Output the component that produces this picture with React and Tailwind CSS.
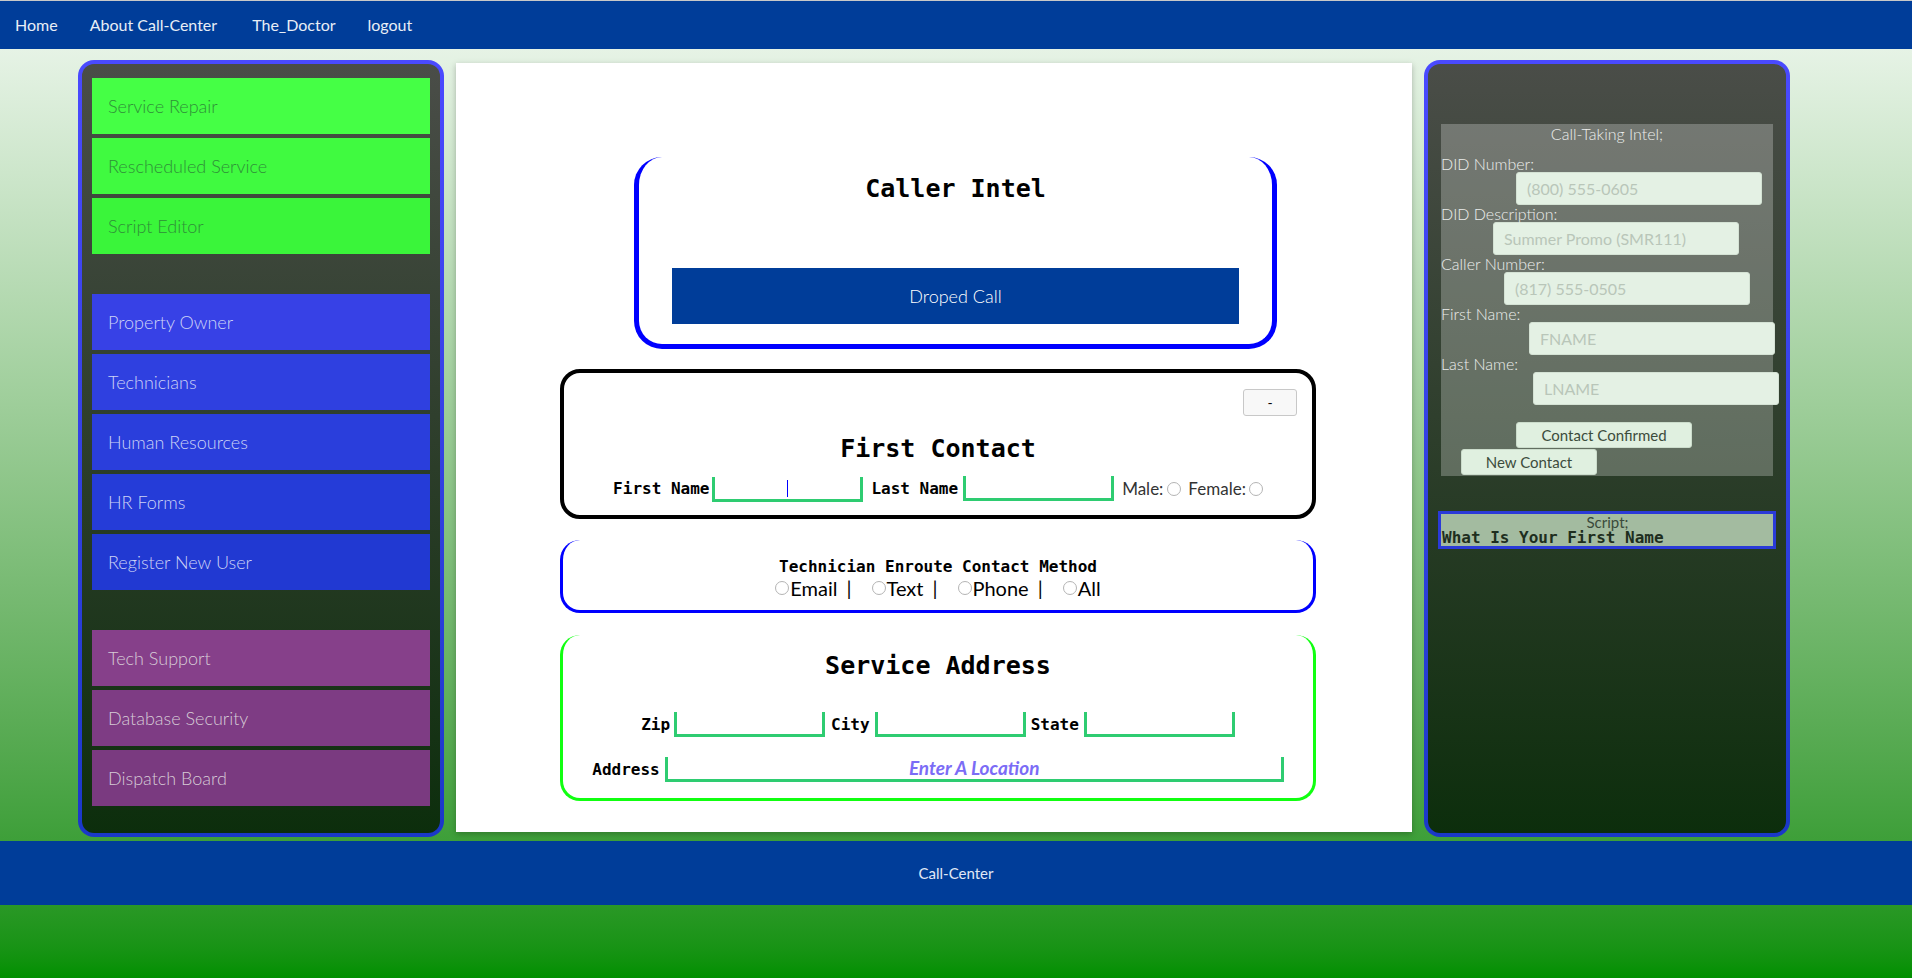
import { useState } from "react";

const sans = "font-['Lato','Open_Sans',sans-serif]";
const mono = "font-['DejaVu_Sans_Mono','Liberation_Mono',monospace]";

const greenItems = [
  { label: "Service Repair", bg: "bg-[#45ff45]" },
  { label: "Rescheduled Service", bg: "bg-[#40fa40]" },
  { label: "Script Editor", bg: "bg-[#3af53a]" },
];

const blueItems = [
  { label: "Property Owner", bg: "bg-[#3741e6]" },
  { label: "Technicians", bg: "bg-[#2f40e0]" },
  { label: "Human Resources", bg: "bg-[#2a3edc]" },
  { label: "HR Forms", bg: "bg-[#253cd8]" },
  { label: "Register New User", bg: "bg-[#2139d2]" },
];

const purpleItems = [
  { label: "Tech Support", bg: "bg-[#86408a]" },
  { label: "Database Security", bg: "bg-[#7e3c84]" },
  { label: "Dispatch Board", bg: "bg-[#7a3a80]" },
];

function MenuGroup({ items, text }) {
  return (
    <div className="flex flex-col gap-[4px]">
      {items.map((it) => (
        <a
          key={it.label}
          href="#"
          className={`h-[56px] flex items-center pl-[16px] text-[18px] font-light ${it.bg} ${text}`}
        >
          {it.label}
        </a>
      ))}
    </div>
  );
}

function Sidebar({ children }) {
  return (
    <div className="w-[366px] h-[777px] shrink-0 rounded-[16px] p-[4px] bg-gradient-to-b from-[#4a4aff] to-[#1a38c8]">
      <div className="h-full rounded-[12px] bg-gradient-to-b from-[#4a4d48] to-[#0c2e0c]">
        {children}
      </div>
    </div>
  );
}

// light grey radio circle, like the browser's unchecked one in the shot
const radio =
  "appearance-none shrink-0 w-[14px] h-[14px] rounded-full border border-[#b4b4b4] bg-white checked:bg-[#3b82f6] checked:border-[#3b82f6]";

const lineInput =
  "h-[25px] w-[151px] border-x-[3px] border-b-[3px] border-[#2ecc71] bg-transparent outline-none";

export default function App() {
  const [method, setMethod] = useState("");

  return (
    <div className={`h-screen flex flex-col bg-gradient-to-b from-[#f0f8f0] to-[#009000] ${sans}`}>
      {/* Navbar */}
      <nav className="h-[49px] shrink-0 border-t border-[#c8c8c8] bg-[#003d99] flex items-center pl-[15px] text-[16px] text-[#e8eef6]">
        <a href="#" className="mr-[32px]">Home</a>
        <a href="#" className="mr-[35px]">About Call-Center</a>
        <a href="#" className="mr-[32px]">The_Doctor</a>
        <a href="#">logout</a>
      </nav>

      <div className="flex items-start gap-[12px] pl-[78px] pt-[11px]">
        {/* Left menu */}
        <Sidebar>
          <div className="px-[10px] pt-[14px] flex flex-col gap-[40px]">
            <MenuGroup items={greenItems} text="text-[#2f8f38]" />
            <MenuGroup items={blueItems} text="text-[#cdd3f6]" />
            <MenuGroup items={purpleItems} text="text-[#d6cbd6]" />
          </div>
        </Sidebar>

        {/* Main panel */}
        <main className="w-[956px] h-[769px] mt-[3px] shrink-0 bg-white shadow-[0_2px_6px_rgba(0,0,0,0.25)] pl-[104px] pt-[94px]">
          {/* Caller Intel */}
          <section className="ml-[74px] w-[643px] h-[192px] rounded-[28px] border-x-[5px] border-b-[5px] border-[#0000ff] px-[33px] pt-[16px]">
            <h2 className={`${mono} font-bold text-[25px] leading-[32px] text-center text-black`}>
              Caller Intel
            </h2>
            <button className="mt-[63px] w-full h-[56px] bg-[#003d99] text-white text-[18px] font-light">
              Droped Call
            </button>
          </section>

          {/* First Contact */}
          <section className="mt-[20px] w-[756px] h-[150px] rounded-[20px] border-[4px] border-black">
            <div className="flex justify-end pr-[15px] pt-[16px]">
              <button className="w-[54px] h-[27px] rounded-[3px] border border-[#c8c8c8] bg-[#f8f8f8] text-[14px] text-black">
                -
              </button>
            </div>
            <h2 className={`${mono} mt-[17px] font-bold text-[25px] leading-[32px] text-center text-black`}>
              First Contact
            </h2>
            <div className="mt-[11px] flex items-center justify-center text-black">
              <span className={`${mono} font-bold text-[16px] mr-[3px]`}>First Name</span>
              <div className="relative">
                <input className={`${lineInput} outline outline-1 outline-[#f4a58a] text-center`} />
                <span className="absolute left-[75px] top-[4px] w-[1px] h-[17px] bg-[#0000ff]" />
              </div>
              <span className={`${mono} font-bold text-[16px] ml-[8px] mr-[5px]`}>Last Name</span>
              <input className={lineInput} />
              <span className="ml-[8px] text-[17px] text-[#333]">Male:</span>
              <input type="radio" name="gender" className={`${radio} ml-[4px] mr-[7px]`} />
              <span className="text-[17px] text-[#333]">Female:</span>
              <input type="radio" name="gender" className={`${radio} ml-[3px]`} />
            </div>
          </section>

          {/* Technician Enroute */}
          <section className="mt-[21px] w-[756px] h-[73px] rounded-[20px] border-x-[3px] border-b-[3px] border-[#0000ff] pt-[17px] text-center">
            <h3 className={`${mono} font-bold text-[16px] leading-[20px] text-black`}>
              Technician Enroute Contact Method
            </h3>
            <div className="flex items-center justify-center text-[20px] leading-[22px] text-black">
              {["Email", "Text", "Phone", "All"].map((m, i) => (
                <span key={m} className="flex items-center">
                  <label className="flex items-center">
                    <input
                      type="radio"
                      name="method"
                      checked={method === m}
                      onChange={() => setMethod(m)}
                      className={`${radio} mr-[1px]`}
                    />
                    {m}
                  </label>
                  {i < 3 && <span className="ml-[9px] mr-[20px]">|</span>}
                </span>
              ))}
            </div>
          </section>

          {/* Service Address */}
          <section className="mt-[22px] w-[756px] h-[166px] rounded-[20px] border-x-[3px] border-b-[3px] border-[#11ff11] pt-[15px]">
            <h2 className={`${mono} font-bold text-[25px] leading-[32px] text-center text-black`}>
              Service Address
            </h2>
            <div className={`mt-[30px] flex items-center justify-center ${mono} font-bold text-[16px] text-black`}>
              <span className="mr-[4px]">Zip</span>
              <input className={lineInput} />
              <span className="ml-[6px] mr-[5px]">City</span>
              <input className={lineInput} />
              <span className="ml-[5px] mr-[5px]">State</span>
              <input className={lineInput} />
            </div>
            <div className={`mt-[20px] flex items-center justify-center ${mono} font-bold text-[16px] text-black`}>
              <span className="mr-[5px]">Address</span>
              <input
                placeholder="Enter A Location"
                className={`h-[25px] w-[619px] border-x-[3px] border-b-[3px] border-[#2ecc71] bg-transparent outline-none text-center ${sans} italic font-bold text-[19px] placeholder:text-[#7b6cf6]`}
              />
            </div>
          </section>
        </main>

        {/* Right panel */}
        <Sidebar>
          <div className="pt-[60px] px-[13px]">
            <div className="bg-white/25 pb-[1px] text-[#eceeec] font-light">
              <p className="h-[19px] leading-[19px] text-center text-[16px]">Call-Taking Intel;</p>
              <div className="mt-[12px]">
                {[
                  { label: "DID Number:", ph: "(800) 555-0605", ml: "ml-[75px]" },
                  { label: "DID Description:", ph: "Summer Promo (SMR111)", ml: "ml-[52px]" },
                  { label: "Caller Number:", ph: "(817) 555-0505", ml: "ml-[63px]" },
                  { label: "First Name:", ph: "FNAME", ml: "ml-[88px]" },
                  { label: "Last Name:", ph: "LNAME", ml: "ml-[92px]" },
                ].map((f) => (
                  <div key={f.label}>
                    <p className="h-[17px] leading-[17px] text-[16px]">{f.label}</p>
                    <input
                      placeholder={f.ph}
                      className={`${f.ml} block w-[246px] h-[33px] rounded-[3px] border border-[#d4e2d4] bg-[#e4f1e4] pl-[10px] text-[16px] font-normal outline-none placeholder:text-[#b9c6b9]`}
                    />
                  </div>
                ))}
              </div>
              <button className="mt-[17px] ml-[75px] block w-[176px] h-[26px] rounded-[3px] border border-[#cbdccb] bg-[#e0f0e0] text-[15px] font-normal text-[#3c4c3c]">
                Contact Confirmed
              </button>
              <button className="mt-[1px] ml-[20px] block w-[136px] h-[26px] rounded-[3px] border border-[#cbdccb] bg-[#e0f0e0] text-[15px] font-normal text-[#3c4c3c]">
                New Contact
              </button>
            </div>

            <div className="mt-[35px] -mx-[3px] border-[3px] border-[#2a3ad8] bg-[#a3bba0] pl-[1px]">
              <p className="text-center text-[15px] leading-[16px] text-[#3a4a3a]">Script;</p>
              <p className={`${mono} font-bold text-[16px] leading-[16px] text-[#1e2e1e]`}>
                What Is Your First Name
              </p>
            </div>
          </div>
        </Sidebar>
      </div>

      {/* Footer */}
      <footer className="mt-[4px] h-[64px] shrink-0 bg-[#003d99] flex items-center justify-center text-[15px] text-[#e2e9f6]">
        Call-Center
      </footer>
    </div>
  );
}
